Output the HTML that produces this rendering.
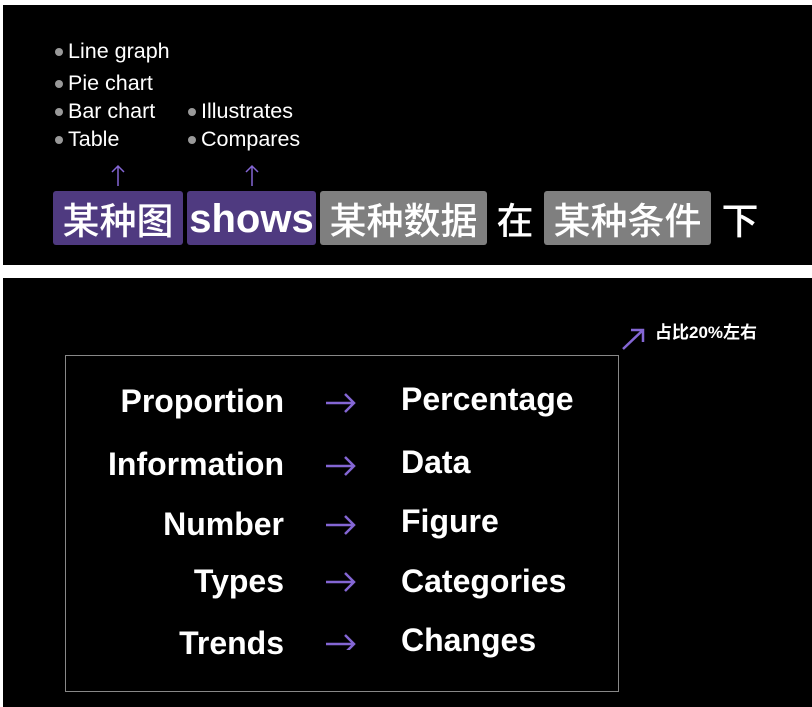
<!DOCTYPE html>
<html><head><meta charset="utf-8"><style>
body{margin:0;width:812px;height:707px;background:#fff;position:relative;overflow:hidden;font-family:"Liberation Sans","Noto Sans CJK SC",sans-serif;}
.p{position:absolute;background:#000;}
.t{position:absolute;color:#fff;white-space:nowrap;}
.b{position:absolute;width:8px;height:8px;border-radius:50%;background:#999;}
.box{position:absolute;top:191px;height:54px;border-radius:3px;color:#fff;font-size:37px;font-weight:500;line-height:54px;text-align:center;font-family:"Noto Sans CJK SC",sans-serif;}
.pu{background:#4f3a80}.gr{background:#7f7f7f}
.l{position:absolute;right:528px;color:#fff;font-size:32px;font-weight:bold;line-height:36px;white-space:nowrap}
.r{position:absolute;left:401px;color:#fff;font-size:32px;font-weight:bold;line-height:36px;white-space:nowrap}
.s{font-size:21.5px}
</style></head><body>
<div class="p" style="left:3px;top:5px;width:809px;height:260px"></div>
<div class="p" style="left:3px;top:278px;width:809px;height:429px"></div>

<div class="b" style="left:55px;top:48px"></div><div class="t s" style="left:68px;top:39px">Line graph</div>
<div class="b" style="left:55px;top:80px"></div><div class="t s" style="left:68px;top:71px">Pie chart</div>
<div class="b" style="left:55px;top:108px"></div><div class="t s" style="left:68px;top:99px">Bar chart</div>
<div class="b" style="left:55px;top:136px"></div><div class="t s" style="left:68px;top:127px">Table</div>
<div class="b" style="left:188px;top:108px"></div><div class="t s" style="left:201px;top:99px">Illustrates</div>
<div class="b" style="left:188px;top:136px"></div><div class="t s" style="left:201px;top:127px">Compares</div>
<svg style="position:absolute;left:111px;top:164px" width="14" height="24"><path d="M7 22 V2 M1 8 L7 2 L13 8" stroke="#8466d4" stroke-width="1.5" fill="none"/></svg>
<svg style="position:absolute;left:245px;top:164px" width="14" height="24"><path d="M7 22 V2 M1 8 L7 2 L13 8" stroke="#8466d4" stroke-width="1.5" fill="none"/></svg>

<div class="box pu" style="left:53px;width:130px">某种图</div>
<div class="box pu" style="left:187px;width:129px;font-family:'Liberation Sans',sans-serif;font-size:40px;font-weight:bold;line-height:56px">shows</div>
<div class="box gr" style="left:320px;width:167px">某种数据</div>
<div class="box" style="left:493px;width:44px">在</div>
<div class="box gr" style="left:544px;width:167px">某种条件</div>
<div class="box" style="left:718px;width:44px">下</div>

<svg style="position:absolute;left:620px;top:325px" width="28" height="28"><path d="M3 24 L23 5 M11 5 H23 V17" stroke="#8466d4" stroke-width="2.5" fill="none"/></svg>
<div class="t" style="left:655px;top:318px;font-size:17px;font-weight:bold;font-family:'Liberation Sans','Noto Sans CJK SC',sans-serif">占比20%左右</div>

<div style="position:absolute;left:65px;top:355px;width:552px;height:335px;border:1.5px solid #888"></div>
<div class="l" style="top:383px">Proportion</div><div class="r" style="top:381px">Percentage</div>
<div class="l" style="top:446px">Information</div><div class="r" style="top:444px">Data</div>
<div class="l" style="top:506px">Number</div><div class="r" style="top:503px">Figure</div>
<div class="l" style="top:563px">Types</div><div class="r" style="top:563px">Categories</div>
<div class="l" style="top:625px">Trends</div><div class="r" style="top:622px">Changes</div>
<svg style="position:absolute;left:324px;top:390px" width="34" height="260" fill="none" stroke="#8466d4" stroke-width="2.5">
<path d="M2 13 H30 M21 4 L30 13 L21 22"/>
<path d="M2 76 H30 M21 67 L30 76 L21 85"/>
<path d="M2 135 H30 M21 126 L30 135 L21 144"/>
<path d="M2 192 H30 M21 183 L30 192 L21 201"/>
<path d="M2 254 H30 M21 245 L30 254 L21 263"/>
</svg>
</body></html>
